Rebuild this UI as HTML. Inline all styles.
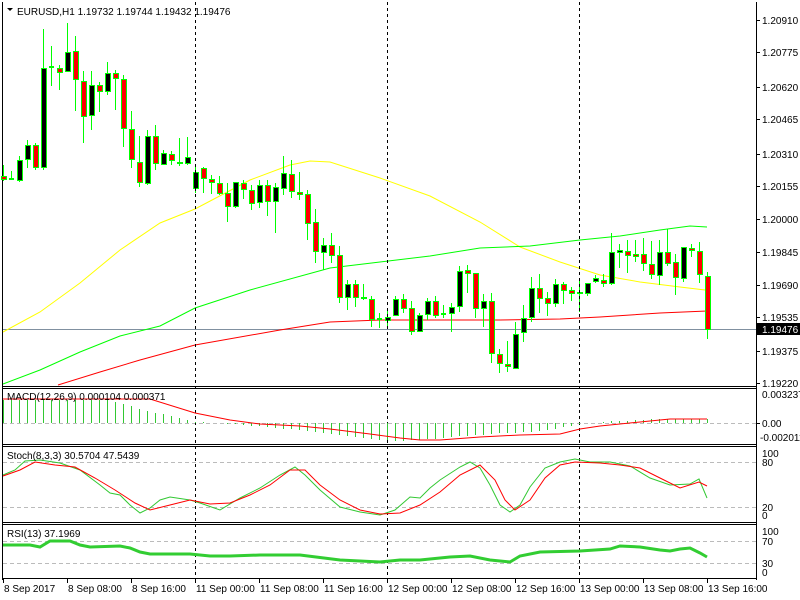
<!DOCTYPE html>
<html><head><meta charset="utf-8"><style>
html,body{margin:0;padding:0;background:#fff;width:800px;height:600px;overflow:hidden}
svg{display:block}
text{font-family:"Liberation Sans",sans-serif;font-size:10px;fill:#000}
</style></head><body>
<svg id="s" width="800" height="600" xmlns="http://www.w3.org/2000/svg">
<rect width="800" height="600" fill="#fff"/>
<g id="g"></g>
</svg>
<script>
const NS="http://www.w3.org/2000/svg";
let h='';
function L(x1,y1,x2,y2,c,w,d){h+=`<line x1="${x1}" y1="${y1}" x2="${x2}" y2="${y2}" stroke="${c}" stroke-width="${w||1}"${d?` stroke-dasharray="${d}"`:''} shape-rendering="crispEdges"/>`;}
function P(pts,c,w){h+=`<polyline points="${pts.map(p=>p.join(',')).join(' ')}" fill="none" stroke="${c}" stroke-width="${w||1}"/>`;}
function T(x,y,s,a){h+=`<text x="${x}" y="${y}"${a?` text-anchor="${a}"`:''}>${s}</text>`;}
function interp(pts,x){for(let i=0;i<pts.length-1;i++){if(x>=pts[i][0]&&x<=pts[i+1][0]){const t=(x-pts[i][0])/(pts[i+1][0]-pts[i][0]);return pts[i][1]+t*(pts[i+1][1]-pts[i][1]);}}return pts[pts.length-1][1];}
// frames
L(2.5,2,2.5,580,'#000');L(756.5,2,756.5,580,'#000');
[386.5,388.5,444.5,446.5,522.5,524.5,578.5].forEach(y=>L(2,y,757,y,'#000'));
// grid dashed levels
L(3,423.5,756,423.5,'#bbb',1,'4,3');
L(3,462.5,756,462.5,'#bbb',1,'4,3');L(3,507.5,756,507.5,'#bbb',1,'4,3');
L(3,541.5,756,541.5,'#bbb',1,'4,3');L(3,563.5,756,563.5,'#bbb',1,'4,3');
// price line
L(3,329.5,756,329.5,'#8090a0');
// MAs
P([[3,332],[40,312],[80,283],[120,250],[160,223],[195,209],[250,180],[290,165],[310,161],[330,162],[380,178],[430,196],[480,222],[520,247],[560,262],[600,275],[640,282],[680,287],[705,290]],'#ffff00');
P([[3,384],[40,370],[80,352],[120,336],[160,326],[195,308],[250,290],[330,268],[380,262],[430,256],[480,248],[530,246],[580,240],[620,236],[660,230],[690,226],[707,227]],'#00ff00');
P([[58,385],[100,372],[140,360],[195,345],[280,330],[330,322],[380,320],[430,320],[500,320],[560,319],[600,317],[660,313],[707,311]],'#ff0000');
// candles: [H,O,C,L]
const C=[[165,176,179,181],[171,179,179,180],[156,180,160,182],[140,159,145,168],[143,145,167,170],[29,167,68,170],[46,67,67,86],[65,68,72,90],[23,71,52,72],[36,51,79,111],[71,81,116,143],[71,115,85,130],[82,85,91,112],[62,91,73,95],[70,73,78,110],[75,79,128,147],[111,129,159,168],[136,162,182,187],[130,183,136,185],[125,136,163,170],[150,164,153,165],[151,154,160,165],[138,162,163,166],[137,163,157,165],
[164,188,172,193],[167,168,178,193],[175,179,182,194],[176,183,193,195],[183,193,206,222],[182,206,182,208],[180,183,189,199],[185,190,203,210],[180,202,185,208],[180,185,201,216],[183,201,187,233],[156,188,173,195],[160,174,191,198],[172,192,194,200],[190,194,223,240],[209,222,251,263],[238,252,245,270],[233,245,255,263],[246,255,297,303],[280,297,284,310],[280,284,297,307],[284,297,298,300],[296,299,319,327],[313,319,319,328],[311,320,317,328],[296,315,299,315],
[294,299,308,313],[301,308,331,335],[313,331,315,331],[298,314,301,320],[296,301,315,318],[305,314,314,318],[303,313,307,332],[266,306,271,312],[265,270,273,293],[273,273,308,318],[294,308,301,327],[293,301,353,363],[349,354,363,373],[341,364,366,372],[322,368,334,368],[305,332,318,342],[277,317,288,322],[274,288,298,313],[292,298,303,316],[279,303,284,307],[282,284,290,304],[287,290,293,301],[281,292,293,312],[283,293,283,296],
[275,281,278,283],[274,280,283,287],[233,283,252,285],[244,252,250,268],[240,251,255,273],[240,254,256,262],[238,254,263,271],[241,264,274,279],[240,275,252,285],[229,252,263,266],[254,262,277,295],[247,278,247,282],[244,248,250,257],[242,251,274,283],[272,276,329,339]];
C.forEach((c,i)=>{const x=3+8*i;const [H,O,Cl,Lo]=c;
 h+=`<line x1="${x+.5}" y1="${H}" x2="${x+.5}" y2="${Lo}" stroke="#00ff00" shape-rendering="crispEdges"/>`;
 const top=Math.min(O,Cl),bot=Math.max(O,Cl);const bull=Cl<O;
 if(bot-top<1){h+=`<rect x="${x-2}" y="${top-1}" width="5" height="2" fill="#00ff00"/>`;}
 else h+=`<rect x="${x-1.5}" y="${top+.5}" width="5" height="${bot-top}" fill="${bull?'#000':'#ff0000'}" stroke="#00ff00" shape-rendering="crispEdges"/>`;
});
// vertical dashed
[195,387,579].forEach(x=>L(x+.5,2,x+.5,580,'#000',1,'3,3'));
// MACD hist
const MH=[[3,400],[110,400],[140,409],[170,416],[195,422],[230,424],[270,427],[330,434],[380,440],[400,441],[420,440],[450,437],[480,435],[500,433],[530,432],[560,428],[580,424],[600,422],[620,421],[660,419],[707,419]];
for(let i=0;i<89;i++){const x=3+8*i;const y=Math.round(interp(MH,x));if(y!=423)L(x+.5,423,x+.5,y,'#32c832');}
P([[3,399],[150,399],[195,413],[230,420],[260,424],[300,426],[330,429],[370,434],[400,438],[420,440],[440,440],[480,437],[520,435],[560,434],[580,429],[600,426],[640,422],[670,419],[707,419]],'#ff0000');
// Stoch
P([[3,475],[15,470],[25,461],[40,460],[60,463],[80,470],[100,485],[110,493],[120,495],[130,505],[140,513],[150,508],[160,500],[170,497],[190,500],[200,503],[220,510],[240,498],[260,488],[280,475],[295,467],[305,475],[320,490],[340,507],[360,512],[380,515],[395,510],[410,497],[420,498],[430,488],[440,480],[460,467],[470,462],[480,468],[490,485],[500,505],[510,512],[520,505],[530,487],[545,468],[560,462],[575,459],[590,462],[610,462],[630,466],[650,478],[670,485],[690,484],[699,479],[707,498]],'#32c832');
P([[3,476],[20,470],[35,462],[55,465],[75,467],[95,478],[115,490],[135,503],[150,510],[170,505],[190,500],[210,504],[230,503],[250,495],[270,485],[290,470],[305,470],[320,485],[340,500],[360,510],[380,514],[400,513],[420,505],[440,492],[460,475],[480,465],[495,480],[505,500],[515,510],[530,500],[545,478],[560,465],[575,462],[600,463],[620,465],[640,468],[660,478],[680,488],[699,482],[707,486]],'#ff0000');
// RSI
P([[3,545],[30,545],[40,547],[50,541],[70,541],[80,545],[90,547],[120,546],[130,548],[140,552],[150,554],[190,554],[210,556],[230,556],[260,555],[300,555],[340,560],[380,562],[400,560],[420,560],[450,557],[470,556],[490,560],[510,562],[520,556],[540,552],[580,551],[610,549],[620,546],[640,547],[660,550],[670,551],[680,549],[690,548],[700,553],[707,557]],'#32cd32',3);
// labels
h+=`<path d="M7 8 L13 8 L10 11 Z" fill="#000"/>`;
T(17,15,'EURUSD,H1  1.19732 1.19744 1.19432 1.19476');
T(7,400,'MACD(12,26,9) 0.000104 0.000371');
T(7,459,'Stoch(8,3,3) 30.5704 47.5543'.replace('5543','5439'));
T(7,537,'RSI(13) 37.1969');
const prices=[['1.20910',20],['1.20775',52],['1.20620',87],['1.20465',119],['1.20310',154],['1.20155',186],['1.20000',219],['1.19845',252],['1.19690',285],['1.19535',317],['1.19375',351],['1.19220',383]];
prices.forEach(([s,y])=>{L(757,y+.5,760,y+.5,'#000');T(762,y+4,s);});
h+=`<rect x="757" y="323" width="43" height="12" fill="#000"/><text x="762" y="333" style="fill:#fff">1.19476</text>`;
T(762,398,'0.003237');L(757,423.5,760,423.5,'#000');T(762,427,'0.00');T(760,441,'-0.002011');
T(762,457,'100');T(762,466,'80');T(762,511,'20');T(762,519,'0');
T(762,535,'100');T(762,545,'70');T(762,567,'30');T(762,576,'0');
const tl=['8 Sep 2017','8 Sep 08:00','8 Sep 16:00','11 Sep 00:00','11 Sep 08:00','11 Sep 16:00','12 Sep 00:00','12 Sep 08:00','12 Sep 16:00','13 Sep 00:00','13 Sep 08:00','13 Sep 16:00'];
tl.forEach((s,i)=>{const x=3+64*i;L(x+.5,579,x+.5,583,'#000');T(x+1,592,s);});
document.getElementById('g').innerHTML=h;
</script>
</body></html>
